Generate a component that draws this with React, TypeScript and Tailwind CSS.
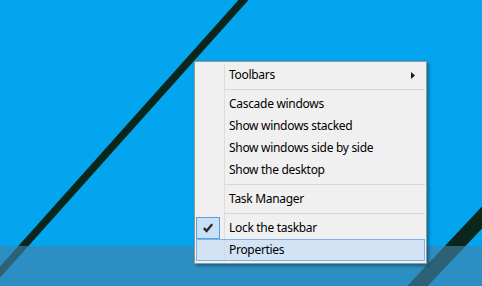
import React from "react";

type Item =
  | { kind: "item"; label: string; submenu?: boolean; checked?: boolean; hot?: boolean }
  | { kind: "sep" };

const items: Item[] = [
  { kind: "item", label: "Toolbars", submenu: true },
  { kind: "sep" },
  { kind: "item", label: "Cascade windows" },
  { kind: "item", label: "Show windows stacked" },
  { kind: "item", label: "Show windows side by side" },
  { kind: "item", label: "Show the desktop" },
  { kind: "sep" },
  { kind: "item", label: "Task Manager" },
  { kind: "sep" },
  { kind: "item", label: "Lock the taskbar", checked: true },
  { kind: "item", label: "Properties", hot: true },
];

function Check() {
  return (
    <svg width="10" height="10" viewBox="0 0 10 10">
      <path d="M0.8 5.2 L3.6 8 L9.2 1.2" fill="none" stroke="#2a2a2a" strokeWidth="2.4" />
    </svg>
  );
}

function Arrow() {
  return (
    <svg width="4" height="7" viewBox="0 0 4 7">
      <path d="M0 0 L4 3.5 L0 7 Z" fill="#1a1a1a" />
    </svg>
  );
}

export default function App() {
  return (
    <div className="relative w-[482px] h-[286px] overflow-hidden bg-[#03a5ef] flex flex-col font-['Noto_Sans','Liberation_Sans',sans-serif]">
      <svg className="absolute inset-0" width="482" height="286" viewBox="0 0 482 286">
        <line x1="248" y1="-5" x2="-16" y2="290" stroke="#0b261a" strokeWidth="7.5" />
        <line x1="536" y1="160" x2="410" y2="294" stroke="#0b261a" strokeWidth="15" />
      </svg>
      <div className="flex-1" />
      <div className="relative h-[40px] bg-[rgba(66,131,170,0.64)]" />

      <div className="absolute left-[194px] top-[61px] w-[233px] border border-[#979797] bg-[#f0f0f0] py-[2px] px-[1px] shadow-[2px_2px_3px_rgba(0,0,0,0.35)]">
        {items.map((it, i) =>
          it.kind === "sep" ? (
            <div key={i} className="flex h-[7px]">
              <div className="w-[28px]" />
              <div className="w-px bg-[#dcdcdc]" />
              <div className="flex-1 flex flex-col pt-[3px]">
                <div className="h-px bg-[#d7d7d7]" />
              </div>
            </div>
          ) : (
            <div
              key={i}
              className={
                it.hot
                  ? "flex h-[22px] items-stretch bg-[#d1e3f5] shadow-[inset_0_0_0_1px_#7db3ea]"
                  : "flex h-[22px] items-stretch"
              }
            >
              <div className="w-[28px] flex">
                {it.checked ? (
                  <div className="w-[24px] h-[22px] border border-[#5a9fe2] bg-[#c9e0f5] flex items-center justify-center">
                    <Check />
                  </div>
                ) : null}
              </div>
              <div className={it.hot ? "w-px bg-[#d4d9de] my-px" : "w-px bg-[#dcdcdc]"} />
              <div className="flex-1 pl-[4px] text-[12px] leading-[22px] tracking-[-0.3px] text-black whitespace-nowrap">
                {it.label}
              </div>
              {it.submenu ? (
                <div className="flex items-center pr-[10px]">
                  <Arrow />
                </div>
              ) : null}
            </div>
          )
        )}
      </div>
    </div>
  );
}
